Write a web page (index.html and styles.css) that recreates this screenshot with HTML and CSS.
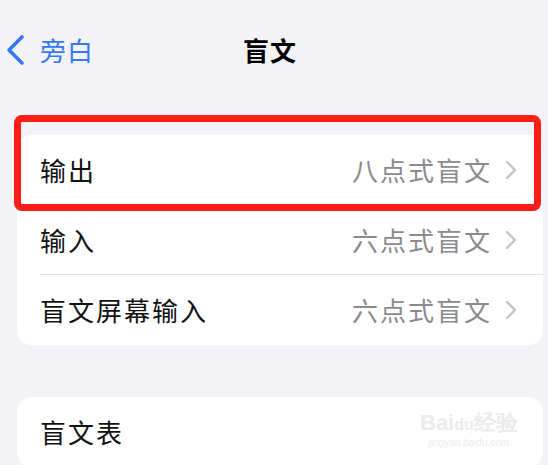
FILE: index.html
```html
<!DOCTYPE html>
<html lang="zh">
<head>
<meta charset="utf-8">
<link rel="stylesheet" href="styles.css">
</head>
<body>
<div class="screen">
  <header class="nav">
    <div class="back">
      <svg class="back-icon" width="20" height="32" viewBox="0 0 20 32"><polyline points="16,3 3,16 16,29" fill="none" stroke="#3478f6" stroke-width="3.6" stroke-linecap="round" stroke-linejoin="round"/></svg>
      <span class="back-label">旁白</span>
    </div>
    <div class="title">盲文</div>
    <div class="nav-spacer"></div>
  </header>

  <section class="group group-first">
    <div class="row">
      <div class="row-body">
        <span class="label">输出</span>
        <span class="value">八点式盲文</span>
        <svg class="chev" width="12" height="20" viewBox="0 0 12 20"><polyline points="2,2 10,10 2,18" fill="none" stroke="#c4c4c7" stroke-width="2.4" stroke-linecap="round" stroke-linejoin="round"/></svg>
      </div>
    </div>
    <div class="row">
      <div class="row-body">
        <span class="label">输入</span>
        <span class="value">六点式盲文</span>
        <svg class="chev" width="12" height="20" viewBox="0 0 12 20"><polyline points="2,2 10,10 2,18" fill="none" stroke="#c4c4c7" stroke-width="2.4" stroke-linecap="round" stroke-linejoin="round"/></svg>
      </div>
    </div>
    <div class="row">
      <div class="row-body">
        <span class="label">盲文屏幕输入</span>
        <span class="value">六点式盲文</span>
        <svg class="chev" width="12" height="20" viewBox="0 0 12 20"><polyline points="2,2 10,10 2,18" fill="none" stroke="#c4c4c7" stroke-width="2.4" stroke-linecap="round" stroke-linejoin="round"/></svg>
      </div>
    </div>
  </section>

  <section class="group group-second">
    <div class="row">
      <div class="row-body">
        <span class="label">盲文表</span>
      </div>
    </div>
  </section>

  <div class="highlight"></div>
  <div class="watermark">
    <div class="wm-logo">Bai<span class="wm-du">du</span>经验</div>
    <div class="wm-url">jingyan.baidu.com</div>
  </div>
</div>
</body>
</html>
```
FILE: styles.css
```css
html, body {
  margin: 0;
  padding: 0;
}
body {
  background: #f2f2f7;
  font-family: "Noto Sans CJK SC", "Noto Sans", sans-serif;
  width: 548px;
  height: 465px;
  overflow: hidden;
}
.screen {
  position: relative;
  width: 548px;
  height: 465px;
}
.nav {
  height: 100px;
  display: flex;
  align-items: center;
  padding-left: 6px;
}
.back {
  display: flex;
  align-items: center;
  width: 210px;
  gap: 14px;
}
.back-icon {
  display: block;
}
.back-label {
  color: #3478f6;
  font-size: 26px;
  line-height: 1;
  letter-spacing: 1px;
}
.title {
  font-size: 26px;
  font-weight: 700;
  color: #000;
  line-height: 1;
  letter-spacing: 1px;
  padding-left: 27px;
}
.group {
  background: #fff;
  border-radius: 14px;
  margin-left: 17px;
  width: 526px;
  overflow: hidden;
}
.group-first {
  margin-top: 35px;
}
.group-second {
  margin-top: 52px;
}
.row {
  height: 70px;
  padding-left: 23px;
  display: flex;
}
.row-body {
  flex: 1;
  display: flex;
  align-items: center;
  padding-right: 26px;
  border-bottom: 1.5px solid #e3e3e6;
}
.row:last-child .row-body {
  border-bottom: none;
}
.label {
  font-size: 26px;
  color: #111;
  letter-spacing: 2px;
  line-height: 1;
  flex: 1;
}
.value {
  font-size: 26px;
  color: #8a8a8e;
  letter-spacing: 2px;
  line-height: 1;
  margin-right: 13px;
}
.chev {
  display: block;
}
.highlight {
  position: absolute;
  left: 14px;
  top: 115px;
  width: 513px;
  height: 82px;
  border: 7px solid #fb1e18;
  border-radius: 8px;
}
.watermark {
  position: absolute;
  left: 420px;
  top: 412px;
  color: #ebebed;
  text-align: center;
  font-family: "Liberation Sans", sans-serif;
}
.wm-logo {
  font-size: 22px;
  line-height: 1;
  font-weight: 700;
}
.wm-du {
  font-size: 16px;
}
.wm-url {
  font-size: 10px;
  margin-top: 3px;
}
```
